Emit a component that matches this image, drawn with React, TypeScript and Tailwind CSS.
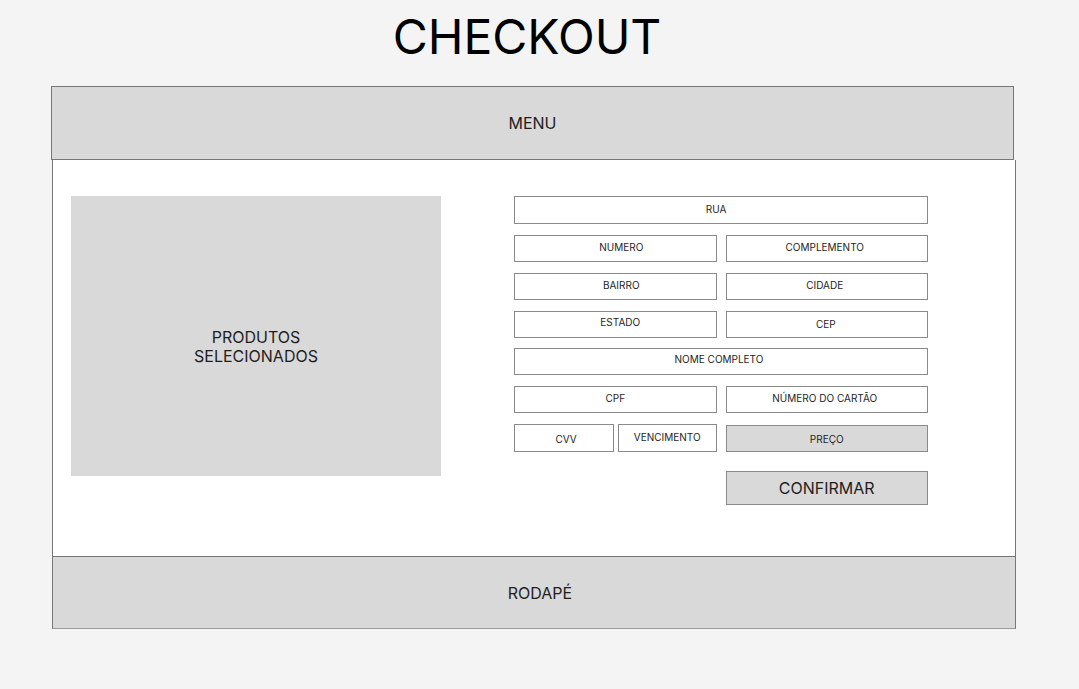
import React from "react";

function Field({
  label,
  className = "",
  textClass = "",
}: {
  label: string;
  className?: string;
  textClass?: string;
}) {
  return (
    <div
      className={`flex items-center justify-center border border-[#8a8a8a] text-[10px] leading-[12px] text-[#1e1e1e] ${className}`}
    >
      <span className={textClass}>{label}</span>
    </div>
  );
}

export default function App() {
  return (
    <div
      className="min-h-[689px] w-full bg-[#f4f4f4] text-[#1e1e1e]"
      style={{ fontFamily: "Inter, 'Noto Sans', sans-serif" }}
    >
      <div className="h-[86px] pt-[13px] pr-[25px] text-center">
        <h1 className="text-[48px] leading-[48px] font-normal text-black">CHECKOUT</h1>
      </div>

      <div className="ml-[51px] flex h-[74px] w-[963px] items-center justify-center border border-[#777777] bg-[#d9d9d9] text-[16px]">
        MENU
      </div>

      <div className="ml-[52px] flex h-[396px] w-[964px] border-x border-[#777777] bg-white pl-[18px] pt-[36px]">
        <div className="flex h-[280px] w-[370px] items-center justify-center bg-[#d9d9d9] text-center text-[16px] leading-[19px]">
          <span className="pt-[21px]">
            PRODUTOS
            <br />
            SELECIONADOS
          </span>
        </div>

        <div className="ml-[73px] flex w-[414px] flex-col">
          <Field label="RUA" className="h-[28px] w-full" textClass="pb-[2px] pr-[10px]" />
          <div className="mt-[11px] grid h-[27px] grid-cols-2 gap-x-[9px]">
            <Field label="NUMERO" textClass="pb-[3px] pl-[12px]" />
            <Field label="COMPLEMENTO" textClass="pb-[3px] pr-[4px]" />
          </div>
          <div className="mt-[11px] grid h-[27px] grid-cols-2 gap-x-[9px]">
            <Field label="BAIRRO" textClass="pb-[3px] pl-[12px]" />
            <Field label="CIDADE" textClass="pb-[3px] pr-[4px]" />
          </div>
          <div className="mt-[11px] grid h-[27px] grid-cols-2 gap-x-[9px]">
            <Field label="ESTADO" textClass="pb-[6px] pl-[10px]" />
            <Field label="CEP" textClass="pb-[1px] pr-[2px]" />
          </div>
          <Field label="NOME COMPLETO" className="mt-[10px] h-[27px] w-full" textClass="pb-[5px] pr-[4px]" />
          <div className="mt-[11px] grid h-[27px] grid-cols-2 gap-x-[9px]">
            <Field label="CPF" textClass="pb-[3px]" />
            <Field label="NÚMERO DO CARTÃO" textClass="pb-[3px] pr-[4px]" />
          </div>
          <div className="mt-[11px] grid h-[28px] grid-cols-2 gap-x-[9px]">
            <div className="flex gap-x-[4px]">
              <Field label="CVV" className="w-[100px]" textClass="pt-[1px] pl-[4px]" />
              <Field label="VENCIMENTO" className="flex-1" textClass="pb-[3px]" />
            </div>
            <Field label="PREÇO" className="mt-[1px] bg-[#d9d9d9]" />
          </div>
          <div className="mt-[19px] grid grid-cols-2 gap-x-[9px]">
            <div />
            <div className="flex h-[34px] items-center justify-center border border-[#8a8a8a] bg-[#d9d9d9] text-[16px]">
              CONFIRMAR
            </div>
          </div>
        </div>
      </div>

      <div className="ml-[52px] flex h-[73px] w-[964px] items-center justify-center border border-[#777777] border-b-[#9a9a9a] bg-[#d9d9d9] pl-[12px] text-[16px]">
        RODAPÉ
      </div>
    </div>
  );
}
